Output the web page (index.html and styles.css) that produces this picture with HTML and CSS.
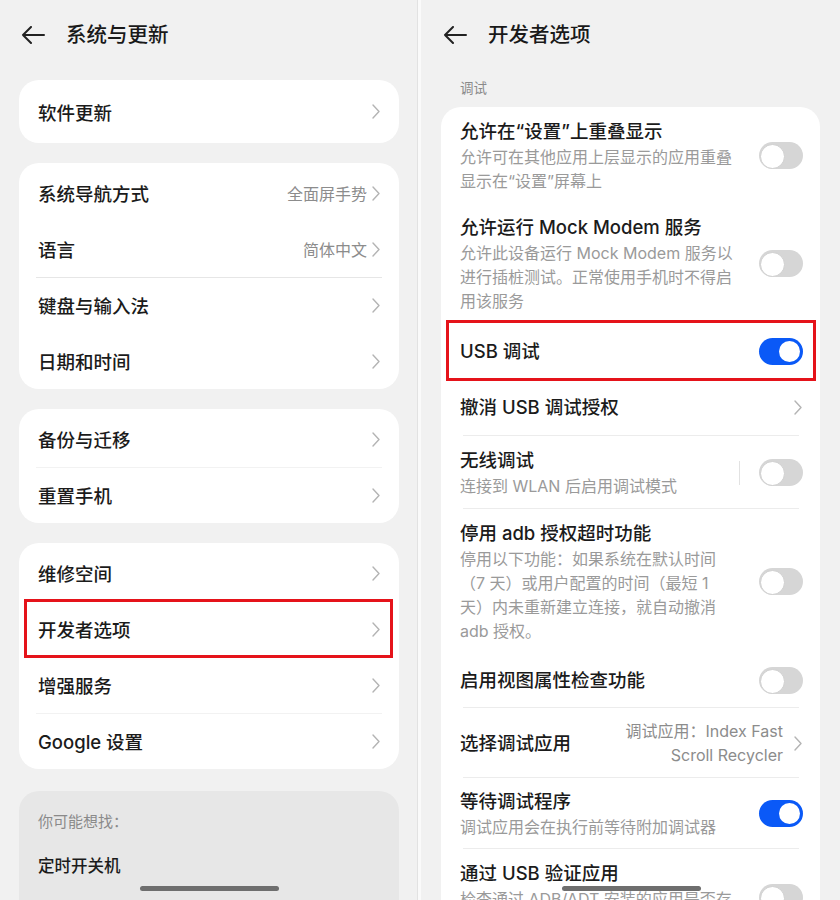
FILE: index.html
```html
<!DOCTYPE html>
<html lang="zh-CN">
<head>
<meta charset="utf-8">
<title>系统与更新 / 开发者选项</title>
<link rel="stylesheet" href="styles.css">
</head>
<body>
<div class="screens">
  <section class="panel panel-left">
    <header class="topbar">
      <svg class="back" viewBox="0 0 24 18" width="24" height="18"><path d="M23 9H2M10 1L2 9l8 8" fill="none" stroke="#222" stroke-width="2" stroke-linecap="round" stroke-linejoin="round"/></svg>
      <h1 class="title">系统与更新</h1>
    </header>

    <div class="card card-single">
      <div class="row"><span class="label">软件更新</span><svg class="chev" viewBox="0 0 8 15" width="8" height="15"><path d="M1 1l6 6.5L1 14" fill="none" stroke="#b4b4b4" stroke-width="1.4" stroke-linecap="round" stroke-linejoin="round"/></svg></div>
    </div>

    <div class="card">
      <div class="row"><span class="label">系统导航方式</span><span class="value">全面屏手势</span><svg class="chev" viewBox="0 0 8 15" width="8" height="15"><path d="M1 1l6 6.5L1 14" fill="none" stroke="#b4b4b4" stroke-width="1.4" stroke-linecap="round" stroke-linejoin="round"/></svg></div>
      <div class="row"><span class="label">语言</span><span class="value">简体中文</span><svg class="chev" viewBox="0 0 8 15" width="8" height="15"><path d="M1 1l6 6.5L1 14" fill="none" stroke="#b4b4b4" stroke-width="1.4" stroke-linecap="round" stroke-linejoin="round"/></svg></div>
      <div class="sep"></div>
      <div class="row"><span class="label">键盘与输入法</span><svg class="chev" viewBox="0 0 8 15" width="8" height="15"><path d="M1 1l6 6.5L1 14" fill="none" stroke="#b4b4b4" stroke-width="1.4" stroke-linecap="round" stroke-linejoin="round"/></svg></div>
      <div class="row"><span class="label">日期和时间</span><svg class="chev" viewBox="0 0 8 15" width="8" height="15"><path d="M1 1l6 6.5L1 14" fill="none" stroke="#b4b4b4" stroke-width="1.4" stroke-linecap="round" stroke-linejoin="round"/></svg></div>
    </div>

    <div class="card">
      <div class="row"><span class="label">备份与迁移</span><svg class="chev" viewBox="0 0 8 15" width="8" height="15"><path d="M1 1l6 6.5L1 14" fill="none" stroke="#b4b4b4" stroke-width="1.4" stroke-linecap="round" stroke-linejoin="round"/></svg></div>
      <div class="sep sep-faint"></div>
      <div class="row"><span class="label">重置手机</span><svg class="chev" viewBox="0 0 8 15" width="8" height="15"><path d="M1 1l6 6.5L1 14" fill="none" stroke="#b4b4b4" stroke-width="1.4" stroke-linecap="round" stroke-linejoin="round"/></svg></div>
    </div>

    <div class="card">
      <div class="row"><span class="label">维修空间</span><svg class="chev" viewBox="0 0 8 15" width="8" height="15"><path d="M1 1l6 6.5L1 14" fill="none" stroke="#b4b4b4" stroke-width="1.4" stroke-linecap="round" stroke-linejoin="round"/></svg></div>
      <div class="row row-marked-left"><span class="label">开发者选项</span><svg class="chev" viewBox="0 0 8 15" width="8" height="15"><path d="M1 1l6 6.5L1 14" fill="none" stroke="#b4b4b4" stroke-width="1.4" stroke-linecap="round" stroke-linejoin="round"/></svg></div>
      <div class="row"><span class="label">增强服务</span><svg class="chev" viewBox="0 0 8 15" width="8" height="15"><path d="M1 1l6 6.5L1 14" fill="none" stroke="#b4b4b4" stroke-width="1.4" stroke-linecap="round" stroke-linejoin="round"/></svg></div>
      <div class="sep sep-faint"></div>
      <div class="row"><span class="label">Google 设置</span><svg class="chev" viewBox="0 0 8 15" width="8" height="15"><path d="M1 1l6 6.5L1 14" fill="none" stroke="#b4b4b4" stroke-width="1.4" stroke-linecap="round" stroke-linejoin="round"/></svg></div>
    </div>

    <div class="card card-suggest">
      <div class="suggest-label">你可能想找：</div>
      <div class="suggest-item">定时开关机</div>
    </div>

    <div class="home-bar"></div>
  </section>

  <div class="divider"></div>

  <section class="panel panel-right">
    <header class="topbar">
      <svg class="back" viewBox="0 0 24 18" width="24" height="18"><path d="M23 9H2M10 1L2 9l8 8" fill="none" stroke="#222" stroke-width="2" stroke-linecap="round" stroke-linejoin="round"/></svg>
      <h1 class="title">开发者选项</h1>
    </header>
    <div class="section-label">调试</div>

    <div class="card card-dev">
      <div class="item">
        <div class="item-text">
          <div class="item-title">允许在“设置”上重叠显示</div>
          <div class="item-sub">允许可在其他应用上层显示的应用重叠<br>显示在“设置”屏幕上</div>
        </div>
        <span class="toggle"></span>
      </div>
      <div class="item">
        <div class="item-text">
          <div class="item-title">允许运行 Mock Modem 服务</div>
          <div class="item-sub">允许此设备运行 Mock Modem 服务以<br>进行插桩测试。正常使用手机时不得启<br>用该服务</div>
        </div>
        <span class="toggle"></span>
      </div>
      <div class="item item-single row-marked-right">
        <div class="item-text"><div class="item-title">USB 调试</div></div>
        <span class="toggle toggle-on"></span>
      </div>
      <div class="item item-single">
        <div class="item-text"><div class="item-title">撤消 USB 调试授权</div></div>
        <svg class="chev" viewBox="0 0 8 15" width="8" height="15"><path d="M1 1l6 6.5L1 14" fill="none" stroke="#b4b4b4" stroke-width="1.4" stroke-linecap="round" stroke-linejoin="round"/></svg>
      </div>
      <div class="sep sep-dev"></div>
      <div class="item">
        <div class="item-text">
          <div class="item-title">无线调试</div>
          <div class="item-sub">连接到 WLAN 后启用调试模式</div>
        </div>
        <span class="vline"></span>
        <span class="toggle"></span>
      </div>
      <div class="sep sep-dev"></div>
      <div class="item">
        <div class="item-text">
          <div class="item-title">停用 adb 授权超时功能</div>
          <div class="item-sub">停用以下功能：如果系统在默认时间<br>（7 天）或用户配置的时间（最短 1<br>天）内未重新建立连接，就自动撤消<br>adb 授权。</div>
        </div>
        <span class="toggle"></span>
      </div>
      <div class="item item-single item-short">
        <div class="item-text"><div class="item-title">启用视图属性检查功能</div></div>
        <span class="toggle"></span>
      </div>
      <div class="sep sep-dev"></div>
      <div class="item">
        <div class="item-text"><div class="item-title">选择调试应用</div></div>
        <div class="item-value">调试应用：Index Fast<br>Scroll Recycler</div>
        <svg class="chev" viewBox="0 0 8 15" width="8" height="15"><path d="M1 1l6 6.5L1 14" fill="none" stroke="#b4b4b4" stroke-width="1.4" stroke-linecap="round" stroke-linejoin="round"/></svg>
      </div>
      <div class="sep sep-dev"></div>
      <div class="item item-tight">
        <div class="item-text">
          <div class="item-title">等待调试程序</div>
          <div class="item-sub">调试应用会在执行前等待附加调试器</div>
        </div>
        <span class="toggle toggle-on"></span>
      </div>
      <div class="sep sep-dev"></div>
      <div class="item">
        <div class="item-text">
          <div class="item-title">通过 USB 验证应用</div>
          <div class="item-sub">检查通过 ADB/ADT 安装的应用是否存<br>在有害行为。</div>
        </div>
        <span class="toggle"></span>
      </div>
    </div>

    <div class="home-bar"></div>
  </section>
</div>
</body>
</html>
```

FILE: styles.css
```css
* { box-sizing: border-box; }

html, body {
  margin: 0;
  padding: 0;
  width: 840px;
  height: 900px;
  overflow: hidden;
  background: #f1f1f1;
  font-family: Inter, "Noto Sans CJK SC", sans-serif;
  color: #1b1b1b;
}

.screens {
  display: flex;
  width: 840px;
  height: 900px;
}

.panel {
  position: relative;
  height: 900px;
  overflow: hidden;
  background: #f1f1f1;
}

.panel-left {
  width: 417px;
  padding: 0 18px 0 19px;
}

.panel-right {
  width: 419px;
  padding: 0 20px 0 20px;
}

.divider {
  width: 4px;
  height: 900px;
  background: #fafafa;
  border-left: 1px solid #e2e2e2;
}

.topbar {
  display: flex;
  align-items: center;
  height: 70px;
  padding-left: 2px;
}

.back {
  display: block;
  margin-right: 21px;
  flex: none;
}

.title {
  margin: 0;
  font-size: 20.5px;
  font-weight: 500;
  line-height: 28px;
  color: #191919;
}

.card {
  background: #fff;
  border-radius: 20px;
  margin-top: 20px;
  padding-top: 2px;
}

.card-single {
  margin-top: 10px;
  padding: 3.5px 0;
}

.row {
  position: relative;
  display: flex;
  align-items: center;
  height: 56px;
  padding: 0 19px;
}

.label {
  flex: 1;
  font-size: 18.5px;
  font-weight: 500;
  white-space: nowrap;
}

.value {
  font-size: 16px;
  color: #8c8c8c;
  margin-right: 5px;
  white-space: nowrap;
}

.chev {
  display: block;
  flex: none;
}

.sep {
  position: relative;
  z-index: 1;
  height: 1px;
  margin: 0 17px -1px;
  background: #e6e6e6;
}

.sep-faint {
  background: #f2f2f2;
}

.row-marked-left::after {
  content: "";
  position: absolute;
  top: -2px;
  bottom: -1px;
  left: 5px;
  right: 6px;
  border: 3px solid #e5131a;
  pointer-events: none;
}

.card-suggest {
  margin-top: 22px;
  background: #e7e7e7;
  padding: 20px 19px;
  height: 200px;
}

.suggest-label {
  font-size: 15px;
  line-height: 22px;
  color: #8a8a8a;
}

.suggest-item {
  margin-top: 22px;
  font-size: 16.5px;
  line-height: 22px;
  font-weight: 500;
  color: #1b1b1b;
}

.home-bar {
  position: absolute;
  bottom: 9px;
  left: 140px;
  width: 139px;
  height: 5px;
  border-radius: 3px;
  background: #6e6e6e;
}

.panel-right .home-bar {
  left: 141px;
}

/* right panel */
.section-label {
  padding: 8px 0 0 19px;
  font-size: 13.5px;
  line-height: 20px;
  color: #8a8a8a;
}

.card-dev {
  margin-top: 9px;
  padding-top: 0;
  padding-bottom: 40px;
}

.card-dev .sep {
  margin-bottom: 0;
}

.item {
  position: relative;
  display: flex;
  align-items: center;
  padding: 11px 18px 10px 19px;
}

.item-single {
  height: 56px;
  padding-top: 0;
  padding-bottom: 0;
}

.item-short {
  height: 54px;
}

.item-tight {
  padding-top: 10px;
  padding-bottom: 9px;
}

.item-text {
  flex: 1;
  min-width: 0;
}

.item-title {
  font-size: 18.5px;
  line-height: 27px;
  font-weight: 500;
  white-space: nowrap;
  color: #1b1b1b;
}

.item-sub {
  font-size: 16px;
  line-height: 24px;
  color: #9a9a9a;
  white-space: nowrap;
}

.item-value {
  font-size: 16px;
  line-height: 24px;
  color: #8c8c8c;
  text-align: right;
  white-space: nowrap;
  margin-right: 11px;
}

.sep-dev {
  margin: 0 21px 0 22px;
  background: #ececec;
}

.vline {
  width: 1px;
  height: 24px;
  background: #e2e2e2;
  margin-right: 19px;
  flex: none;
}

.row-marked-right::after {
  content: "";
  position: absolute;
  top: -3px;
  bottom: -2px;
  left: 5px;
  right: 4px;
  border: 3px solid #e5131a;
  pointer-events: none;
}

.toggle {
  position: relative;
  flex: none;
  width: 44px;
  height: 27px;
  border-radius: 14px;
  background: #d6d6d6;
  margin-right: -1px;
}

.toggle::after {
  content: "";
  position: absolute;
  top: 2px;
  left: 1px;
  width: 23px;
  height: 23px;
  border-radius: 50%;
  background: #fff;
  border: 1px solid #cfcfcf;
}

.toggle-on {
  background: #0a59f7;
}

.toggle-on::after {
  left: auto;
  right: 3px;
  top: 3px;
  width: 21px;
  height: 21px;
  border: none;
}
```
